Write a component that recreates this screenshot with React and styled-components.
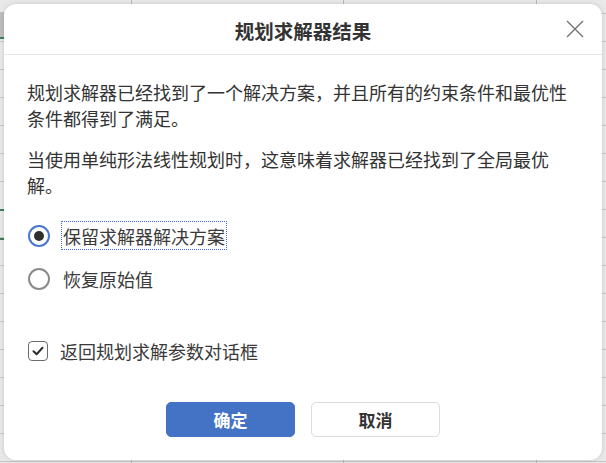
import React, { useState } from "react";
import styled, { createGlobalStyle } from "styled-components";

const Global = createGlobalStyle`
  html, body { margin: 0; padding: 0; }
  body {
    width: 606px;
    height: 463px;
    overflow: hidden;
    background: #e7e7e7;
    font-family: "Noto Sans CJK SC", "Noto Sans", sans-serif;
  }
  * { box-sizing: border-box; }
`;

const Stage = styled.div`
  width: 606px;
  height: 463px;
  padding: 4px 4px 3px 4px;
  display: flex;
  background-color: #e8e8e8;
  background-repeat: no-repeat;
  background-size: 4px 100%, 100% 100%, 100% 100%, 100% 100%, 100% 100%;
  background-image:
    linear-gradient(to bottom,
      transparent 12px, #bdbdbd 12px, #bdbdbd 37px,
      #3f7f5a 37px, #3f7f5a 39px, transparent 39px,
      transparent 209px, #3f7f5a 209px, #3f7f5a 211px, transparent 211px,
      transparent 238px, #3f7f5a 238px, #3f7f5a 240px, transparent 240px),
    linear-gradient(to right, transparent 131px, #b9b9b9 131px, #b9b9b9 132px, transparent 132px),
    linear-gradient(to right, transparent 343px, #b9b9b9 343px, #b9b9b9 344px, transparent 344px),
    linear-gradient(to right, transparent 536px, #b9b9b9 536px, #b9b9b9 537px, transparent 537px),
    repeating-linear-gradient(to bottom, transparent 0, transparent 13px, #c4c4c4 13px, #c4c4c4 14px, transparent 14px, transparent 28px);
`;

const Dialog = styled.div`
  flex: 1;
  background: #ffffff;
  border-radius: 12px;
  box-shadow: 0 0 4px rgba(0, 0, 0, 0.14);
  display: flex;
  flex-direction: column;
  color: #333333;
`;

const Header = styled.div`
  height: 51px;
  flex-shrink: 0;
  display: flex;
  align-items: center;
  justify-content: center;
  position: relative;
  border-bottom: 1px solid #e6e6e6;
`;

const Title = styled.h1`
  margin: 4px 0 0 0;
  font-size: 19.5px;
  font-weight: 700;
  color: #333333;
  line-height: 1;
`;

const CloseButton = styled.button`
  position: absolute;
  right: 17px;
  top: 15px;
  width: 20px;
  height: 20px;
  padding: 0;
  border: none;
  background: transparent;
  display: flex;
  align-items: center;
  justify-content: center;
  cursor: pointer;
`;

const Body = styled.div`
  flex: 1;
  display: flex;
  flex-direction: column;
  padding: 24px 23px 23px 23px;
`;

const Paragraph = styled.p`
  margin: 0 0 15px 0;
  font-size: 18px;
  line-height: 26px;
  color: #333333;
`;

const Options = styled.div`
  display: flex;
  flex-direction: column;
  gap: 14px;
  margin-top: 8px;
`;

const OptionRow = styled.label`
  display: flex;
  align-items: center;
  height: 29px;
  cursor: pointer;
`;

const RadioCircle = styled.span`
  width: 22px;
  height: 22px;
  margin-left: 1px;
  border-radius: 50%;
  border: ${(p) => (p.$checked ? "2px solid #4a78d0" : "2px solid #8a8a8a")};
  display: flex;
  align-items: center;
  justify-content: center;
  flex-shrink: 0;
`;

const RadioDot = styled.span`
  width: 10px;
  height: 10px;
  border-radius: 50%;
  background: #2f2f2f;
`;

const OptionLabel = styled.span`
  margin-left: 11px;
  padding: 0 1px;
  height: 29px;
  display: flex;
  align-items: center;
  font-size: 18px;
  color: #3a3a3a;
  border: 1px dotted ${(p) => (p.$focused ? "#3f6fce" : "transparent")};
`;

const CheckRow = styled.label`
  display: flex;
  align-items: center;
  height: 29px;
  margin-top: 43px;
  cursor: pointer;
`;

const CheckBox = styled.span`
  width: 20px;
  height: 20px;
  margin-left: 1px;
  border-radius: 4px;
  border: 1.5px solid #6b6b6b;
  display: flex;
  align-items: center;
  justify-content: center;
  flex-shrink: 0;
`;

const CheckLabel = styled.span`
  margin-left: 12px;
  font-size: 18px;
  color: #3a3a3a;
`;

const Footer = styled.div`
  margin-top: auto;
  display: flex;
  justify-content: center;
  gap: 16px;
`;

const Button = styled.button`
  width: 129px;
  height: 35px;
  border-radius: 5px;
  font-family: "Noto Sans CJK SC", "Noto Sans", sans-serif;
  font-size: 17px;
  font-weight: 700;
  cursor: pointer;
  display: flex;
  align-items: center;
  justify-content: center;
  background: ${(p) => (p.$primary ? "#4472c4" : "#ffffff")};
  color: ${(p) => (p.$primary ? "#ffffff" : "#333333")};
  border: ${(p) => (p.$primary ? "1px solid #4472c4" : "1px solid #dcdcdc")};
`;

const options = ["保留求解器解决方案", "恢复原始值"];

export default function App() {
  const [choice, setChoice] = useState(0);
  const [back, setBack] = useState(true);
  return (
    <>
      <Global />
      <Stage>
        <Dialog>
          <Header>
            <Title>规划求解器结果</Title>
            <CloseButton aria-label="关闭">
              <svg width="18" height="18" viewBox="0 0 18 18">
                <path d="M1 1 L17 17 M17 1 L1 17" stroke="#6f6f6f" strokeWidth="1.3" fill="none" />
              </svg>
            </CloseButton>
          </Header>
          <Body>
            <Paragraph>
              规划求解器已经找到了一个解决方案，并且所有的约束条件和最优性条件都得到了满足。
            </Paragraph>
            <Paragraph>
              当使用单纯形法线性规划时，这意味着求解器已经找到了全局最优解。
            </Paragraph>
            <Options>
              {options.map((o, i) => (
                <OptionRow key={o} onClick={() => setChoice(i)}>
                  <RadioCircle $checked={choice === i}>
                    {choice === i && <RadioDot />}
                  </RadioCircle>
                  <OptionLabel $focused={choice === i}>{o}</OptionLabel>
                </OptionRow>
              ))}
            </Options>
            <CheckRow onClick={() => setBack(!back)}>
              <CheckBox>
                {back && (
                  <svg width="14" height="14" viewBox="0 0 14 14">
                    <path d="M2.5 7.2 L5.6 10.2 L11.5 3.8" stroke="#2f2f2f" strokeWidth="2" fill="none" strokeLinecap="round" strokeLinejoin="round" />
                  </svg>
                )}
              </CheckBox>
              <CheckLabel>返回规划求解参数对话框</CheckLabel>
            </CheckRow>
            <Footer>
              <Button $primary>确定</Button>
              <Button>取消</Button>
            </Footer>
          </Body>
        </Dialog>
      </Stage>
    </>
  );
}
